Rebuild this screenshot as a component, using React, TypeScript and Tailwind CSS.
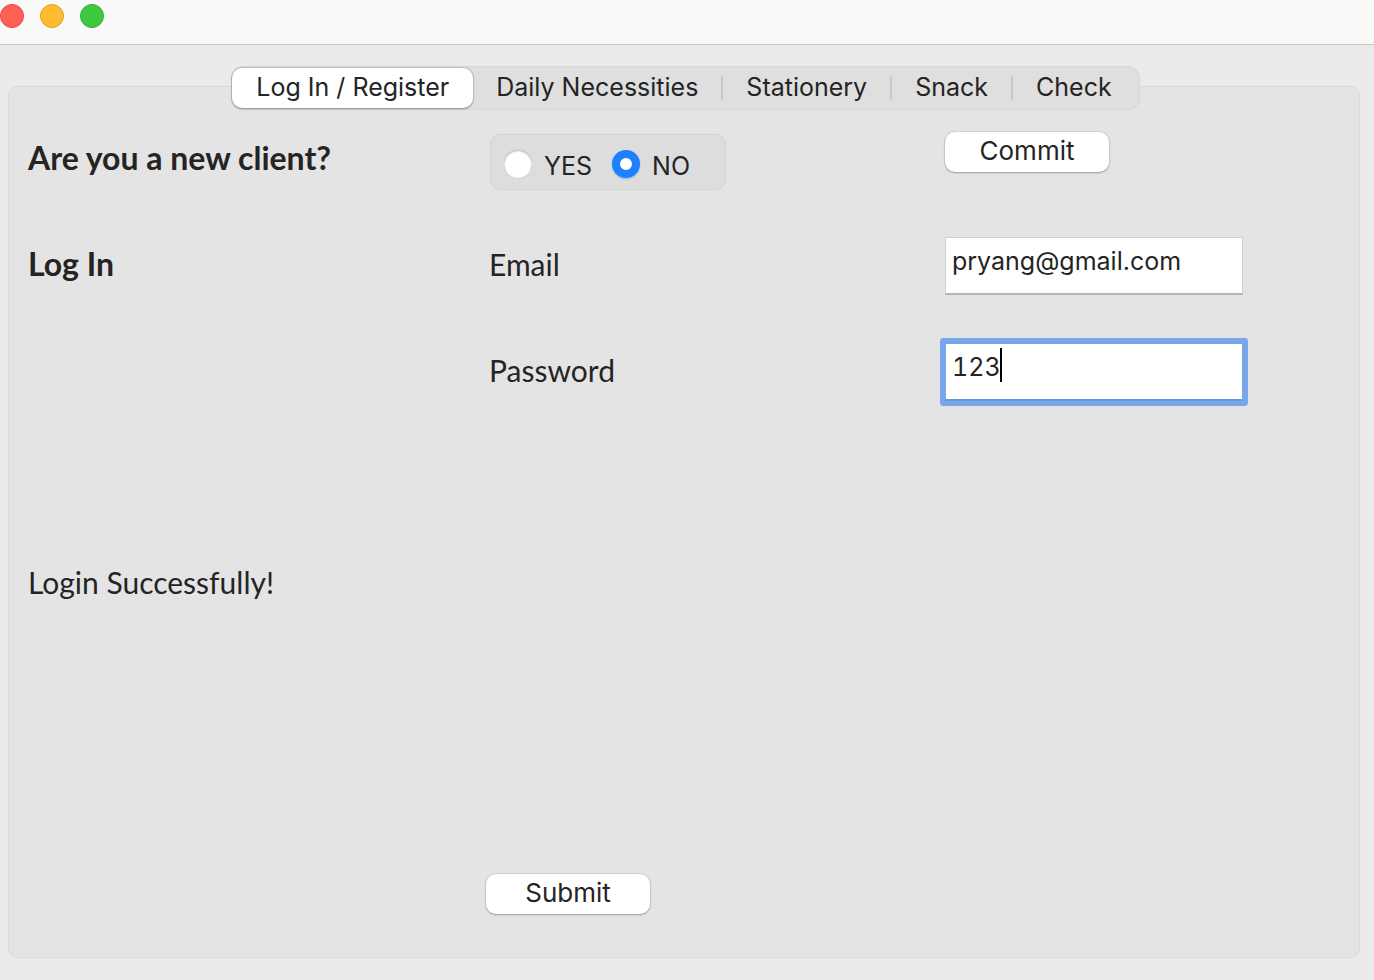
import { useState } from "react";

const tabs = ["Log In / Register", "Daily Necessities", "Stationery", "Snack", "Check"];

const buttonClass =
  "mt-[25px] h-10 w-[164px] self-start rounded-[10px] bg-white pb-0.5 text-center text-[26px] leading-8 shadow-[0_0_1px_1px_rgba(0,0,0,0.07),0_1px_2px_rgba(0,0,0,0.26)]";

const radioClass =
  "size-7 appearance-none rounded-full bg-white shadow-[inset_0_1px_2px_rgba(0,0,0,0.28),0_0_1px_rgba(0,0,0,0.2)] checked:border-8 checked:border-[#1f80fd] checked:shadow-[0_1px_2px_rgba(31,128,253,0.4)]";

const headingClass = "pb-1 font-['Lato',sans-serif] text-[32px] leading-10 font-bold";
const textClass = "pb-1 font-['Lato',sans-serif] text-[30px] leading-10";

function TabBar({ active, onSelect }: { active: number; onSelect: (index: number) => void }) {
  return (
    <div
      role="tablist"
      className="relative z-10 mx-auto -mb-6 flex h-11 w-fit items-center rounded-xl border border-[#d6d6d6] bg-[#dfdfdf] pr-1"
    >
      {tabs.map((tab, index) => (
        <div key={tab} className="flex items-center">
          {index > 1 && <span className="h-6 w-0.5 bg-[#c9c9c9]" />}
          <button
            type="button"
            role="tab"
            aria-selected={index === active}
            onClick={() => onSelect(index)}
            className={
              index === active
                ? "h-10 rounded-[10px] bg-white px-6 pb-0.5 text-[25px] leading-8 whitespace-nowrap shadow-[0_0_1px_1px_rgba(0,0,0,0.12),0_1px_2px_rgba(0,0,0,0.26)]"
                : "h-10 px-[23px] pb-0.5 text-[25px] leading-8 whitespace-nowrap"
            }
          >
            {tab}
          </button>
        </div>
      ))}
    </div>
  );
}

export default function App() {
  const [active, setActive] = useState(0);
  const [isNew, setIsNew] = useState(false);
  const [email, setEmail] = useState("pryang@gmail.com");
  const [password, setPassword] = useState("123");

  return (
    <div className="flex min-h-screen flex-col bg-[#ebebeb] font-['Inter',sans-serif] text-[#242424]">
      <header className="flex h-[45px] items-start gap-4 border-b border-[#c6c6c6] bg-[#f9f9f7] pt-1">
        <button type="button" aria-label="Close" className="size-6 rounded-full border border-[#e2463f] bg-[#fe5f57]" />
        <button type="button" aria-label="Minimize" className="size-6 rounded-full border border-[#e0a024] bg-[#febc2e]" />
        <button type="button" aria-label="Zoom" className="size-6 rounded-full border border-[#2fae31] bg-[#3dc93f]" />
      </header>

      <main className="pt-[21px] pr-3.5 pb-5 pl-2">
        <div className="pl-[3px]">
          <TabBar active={active} onSelect={setActive} />
        </div>
        <form
          onSubmit={(event) => event.preventDefault()}
          className="rounded-[10px] border border-[#d9d9d9] bg-[#e4e4e4] pt-5 pr-2 pb-0.5 pl-[19px]"
        >
          <div className="grid auto-rows-[106px] grid-cols-[458fr_459fr_406fr] items-center">
            <h2 className={headingClass}>Are you a new client?</h2>
            <div
              role="radiogroup"
              aria-label="Are you a new client?"
              className="mt-1 ml-1 flex h-14 w-[236px] items-center rounded-[10px] border border-[#d2d2d2] bg-[#dddddd] pt-1 pl-[13px] text-[25px] leading-8"
            >
              <label className="flex items-center gap-3">
                <input type="radio" name="client" checked={isNew} onChange={() => setIsNew(true)} className={radioClass} />
                <span className="pt-1">YES</span>
              </label>
              <label className="ml-5 flex items-center gap-3">
                <input type="radio" name="client" checked={!isNew} onChange={() => setIsNew(false)} className={radioClass} />
                <span className="pt-1">NO</span>
              </label>
            </div>
            <button type="button" className={buttonClass}>
              Commit
            </button>

            <h2 className={headingClass}>Log In</h2>
            <label htmlFor="email" className={`${textClass} ml-[3px]`}>
              Email
            </label>
            <input
              id="email"
              type="text"
              value={email}
              onChange={(event) => setEmail(event.target.value)}
              className="h-[58px] w-[298px] border border-b-2 border-[#d0d0d0] border-b-[#b4b4b4] bg-white px-1.5 pb-2.5 text-[25px] leading-8 outline-none"
            />

            <label htmlFor="password" className={`${textClass} col-start-2 ml-[3px]`}>
              Password
            </label>
            <div className="relative w-fit">
              <input
                id="password"
                type="text"
                value={password}
                onChange={(event) => setPassword(event.target.value)}
                className="block h-[58px] w-[298px] rounded-[1px] border border-b-2 border-[#78a6ee] border-b-[#6496dd] bg-white px-1.5 pb-2.5 text-[25px] leading-8 tabular-nums shadow-[0_0_0_5px_#79a5ea] outline-none"
              />
              <span className="absolute top-[5px] left-[55px] h-[34px] w-0.5 bg-black" />
            </div>

            <p className={`${textClass} col-start-1 row-start-5`}>Login Successfully!</p>

            <button type="submit" className={`${buttonClass} col-start-2 row-start-8`}>
              Submit
            </button>
          </div>
        </form>
      </main>
    </div>
  );
}
